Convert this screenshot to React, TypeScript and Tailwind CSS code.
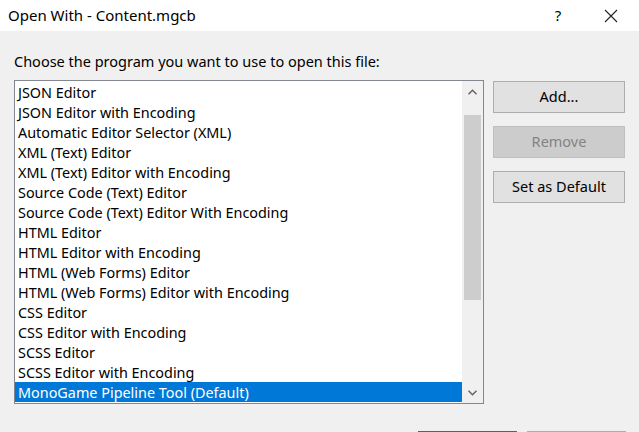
import React from 'react';

const programs = [
  'JSON Editor',
  'JSON Editor with Encoding',
  'Automatic Editor Selector (XML)',
  'XML (Text) Editor',
  'XML (Text) Editor with Encoding',
  'Source Code (Text) Editor',
  'Source Code (Text) Editor With Encoding',
  'HTML Editor',
  'HTML Editor with Encoding',
  'HTML (Web Forms) Editor',
  'HTML (Web Forms) Editor with Encoding',
  'CSS Editor',
  'CSS Editor with Encoding',
  'SCSS Editor',
  'SCSS Editor with Encoding',
  'MonoGame Pipeline Tool (Default)',
];

const font = { fontFamily: '"Segoe UI", "Noto Sans", sans-serif' };

function Chevron({ down }: { down?: boolean }) {
  return (
    <svg width="9" height="6" viewBox="0 0 9 6" className="block">
      <path
        d={down ? 'M0.5 0.8 L4.5 4.8 L8.5 0.8' : 'M0.5 5.2 L4.5 1.2 L8.5 5.2'}
        fill="none"
        stroke="#606060"
        strokeWidth="1.4"
      />
    </svg>
  );
}

export default function App() {
  const selected = programs.length - 1;

  return (
    <div className="w-[639px] h-[432px] overflow-hidden bg-[#f0f0f0] text-black" style={font}>
      {/* Title bar */}
      <div className="h-[31px] bg-white flex items-center pl-[8px]">
        <span className="text-[15px] leading-none">Open With - Content.mgcb</span>
        <span className="ml-auto w-[20px] text-center text-[15px] leading-none mr-[36px]">?</span>
        <svg width="14" height="14" viewBox="0 0 14 14" className="mr-[21px]">
          <path d="M1 1 L13 13 M13 1 L1 13" stroke="#222" strokeWidth="1.1" />
        </svg>
      </div>

      {/* Body */}
      <div className="px-[14px]">
        <p className="text-[14.5px] leading-[20px] pt-[20px] pb-[9px]">
          Choose the program you want to use to open this file:
        </p>

        <div className="flex">
          {/* List box */}
          <div className="w-[470px] h-[324px] border border-[#828790] bg-white flex">
            <ul className="flex-1 pt-[1px]">
              {programs.map((p, i) => (
                <li
                  key={p}
                  className={
                    'h-[20px] pl-[3px] pt-[1px] overflow-hidden text-[14.4px] leading-[20px] whitespace-nowrap ' +
                    (i === selected ? 'bg-[#0078d7] text-white' : '')
                  }
                >
                  {p}
                </li>
              ))}
            </ul>
            {/* Scrollbar */}
            <div className="w-[21px] bg-[#f0f0f0] flex flex-col">
              <div className="h-[21px] flex items-center justify-center">
                <Chevron />
              </div>
              <div className="flex-1 pt-[13px] px-[2px]">
                <div className="h-[185px] bg-[#cdcdcd]" />
              </div>
              <div className="h-[21px] flex items-center justify-center">
                <Chevron down />
              </div>
            </div>
          </div>

          {/* Buttons */}
          <div className="ml-[9px] w-[132px] flex flex-col gap-[13px] pt-[1px]">
            <button className="h-[32px] border border-[#adadad] bg-[#e1e1e1] text-[14.5px]">Add...</button>
            <button className="h-[32px] border border-[#bfbfbf] bg-[#cccccc] text-[14.5px] text-[#838383]">
              Remove
            </button>
            <button className="h-[32px] border border-[#adadad] bg-[#e1e1e1] text-[14.5px]">
              Set as Default
            </button>
          </div>
        </div>

        {/* Dialog buttons (only their top edge is in view) */}
        <div className="flex justify-end gap-[10px] mt-[27px] mr-[-1px]">
          <div className="w-[99px] h-[32px] border-2 border-[#0078d7] bg-[#e1e1e1]" />
          <div className="w-[99px] h-[32px] border border-[#adadad] bg-[#e1e1e1]" />
        </div>
      </div>
    </div>
  );
}
